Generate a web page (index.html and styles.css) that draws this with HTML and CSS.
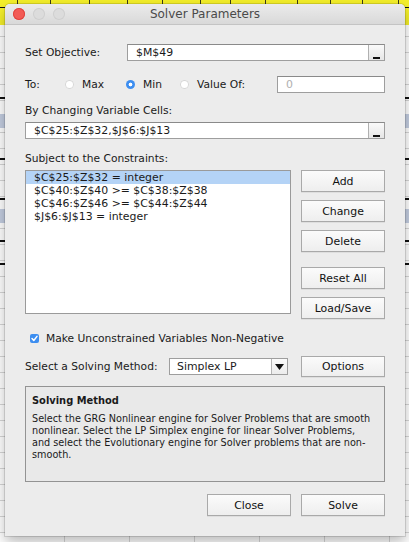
FILE: index.html
```html
<!DOCTYPE html>
<html>
<head>
<meta charset="utf-8">
<link rel="stylesheet" href="styles.css">
</head>
<body>
<div class="sheet">
  <div class="topcells"><span class="c1"></span><span class="c2"></span><span class="c3"></span><span class="c4"></span><span class="c5"></span><span class="c6"></span><span class="c7"></span><span class="c8"></span><span class="c9"></span><span class="c10"></span><span class="c11"></span><span class="c12"></span></div>
  <div class="mark m1"></div><div class="mark m2"></div><div class="mark m3"></div><div class="mark m4"></div>
  <div class="mark m5"></div><div class="mark m6"></div>
  <div class="cellsel s1"></div><div class="cellsel s2"></div>
</div>
<div class="window">
  <div class="titlebar">
    <div class="lights"><span class="light red"></span><span class="light"></span><span class="light"></span></div>
    <div class="title">Solver Parameters</div>
  </div>
  <div class="content">
    <div class="row r-obj">
      <div class="label w-obj">Set Objective:</div>
      <div class="field grow"><span class="ftext">$M$49</span><span class="refbtn"></span></div>
    </div>
    <div class="row r-to">
      <div class="label w-to">To:</div>
      <div class="radio-item r-max"><span class="radio"></span><span>Max</span></div>
      <div class="radio-item r-min"><span class="radio on"></span><span>Min</span></div>
      <div class="radio-item r-val"><span class="radio"></span><span>Value Of:</span></div>
      <div class="field valfield"><span class="ftext ph">0</span></div>
    </div>
    <div class="label l-cells">By Changing Variable Cells:</div>
    <div class="field f-cells"><span class="ftext">$C$25:$Z$32,$J$6:$J$13</span><span class="refbtn"></span></div>
    <div class="label l-cons">Subject to the Constraints:</div>
    <div class="cons">
      <div class="list">
        <div class="item sel">$C$25:$Z$32 = integer</div>
        <div class="item">$C$40:$Z$40 &gt;= $C$38:$Z$38</div>
        <div class="item">$C$46:$Z$46 &gt;= $C$44:$Z$44</div>
        <div class="item">$J$6:$J$13 = integer</div>
      </div>
      <div class="btncol">
        <div class="btn">Add</div>
        <div class="btn">Change</div>
        <div class="btn">Delete</div>
        <div class="btn b-reset">Reset All</div>
        <div class="btn">Load/Save</div>
      </div>
    </div>
    <div class="checkrow">
      <span class="check"><svg width="9" height="9" viewBox="0 0 9 9"><path d="M2 4.6 L3.8 6.5 L7 2.4" fill="none" stroke="#fff" stroke-width="1.5" stroke-linecap="round" stroke-linejoin="round"/></svg></span>
      <span>Make Unconstrained Variables Non-Negative</span>
    </div>
    <div class="row r-method">
      <div class="label w-method">Select a Solving Method:</div>
      <div class="select"><span class="stext">Simplex LP</span><span class="arrow"><svg width="9" height="6" viewBox="0 0 9 6"><path d="M0 0 H9 L4.5 6 Z" fill="#111"/></svg></span></div>
      <div class="btn b-options">Options</div>
    </div>
    <div class="desc">
      <div class="desc-title">Solving Method</div>
      <div class="desc-text">Select the GRG Nonlinear engine for Solver Problems that are smooth nonlinear. Select the LP Simplex engine for linear Solver Problems, and select the Evolutionary engine for Solver problems that are non-smooth.</div>
    </div>
    <div class="footer">
      <div class="btn">Close</div>
      <div class="btn">Solve</div>
    </div>
  </div>
</div>
</body>
</html>
```
FILE: styles.css
```css
html, body {
  margin: 0;
  padding: 0;
}
body {
  width: 409px;
  height: 542px;
  overflow: hidden;
  position: relative;
  font-family: "DejaVu Sans", sans-serif;
  color: #1a1a1a;
  background-color: #ffffff;
  background-image:
    repeating-linear-gradient(to bottom, transparent 0, transparent 15px, #d6d6d6 15px, #d6d6d6 16px),
    repeating-linear-gradient(to right, transparent 0, transparent 64px, #d6d6d6 64px, #d6d6d6 65px);
  background-size: 409px 542px, 409px 542px;
  background-repeat: no-repeat;
  background-position: 0 5px, 0 0;
}
.sheet {
  position: absolute;
  inset: 0;
}
.topcells {
  position: absolute;
  left: 0;
  top: 0;
  width: 409px;
  height: 25px;
  background: #f4ef2a;
  display: flex;
}
.topcells span {
  height: 25px;
  border-right: 1px solid #3a3a1a;
  box-sizing: border-box;
}
.c1 { width: 18px; }
.c2 { width: 33px; }
.c3 { width: 39px; }
.c4 { width: 38px; }
.c5 { width: 35px; }
.c6 { width: 38px; }
.c7 { width: 30px; }
.c8 { width: 35px; }
.c9 { width: 32px; }
.c10 { width: 33px; }
.c11 { width: 32px; }
.c12 { width: 36px; }
.mark {
  position: absolute;
  height: 2px;
  background: #111;
  width: 409px;
  left: 0;
}
.m1 { top: 7px; height: 1px; }
.m2 { top: 97px; }
.m3 { top: 158px; }
.m4 { top: 198px; }
.m5 { top: 240px; }
.m6 { top: 263px; }
.cellsel {
  position: absolute;
  height: 14px;
  width: 409px;
  left: 0;
  background: #c3cde0;
}
.s1 { top: 114px; }
.s2 { top: 209px; }

.window {
  position: relative;
  margin: 4px 0 0 5px;
  width: 400px;
  height: 532px;
  background: #ececec;
  border-radius: 5px 5px 0 0;
  box-shadow: 0 0 0 1px rgba(0,0,0,0.12), 0 6px 14px rgba(0,0,0,0.28);
  display: flex;
  flex-direction: column;
}
.titlebar {
  height: 21px;
  flex: none;
  background: linear-gradient(#ebebeb, #d9d9d9);
  border-bottom: 1px solid #c4c4c4;
  box-sizing: border-box;
  border-radius: 5px 5px 0 0;
  display: flex;
  align-items: center;
  position: relative;
}
.lights {
  display: flex;
  gap: 8px;
  padding-left: 8px;
}
.light {
  width: 12px;
  height: 12px;
  border-radius: 50%;
  background: #dcdcdc;
  box-shadow: inset 0 0 0 1px #cfcfcf;
}
.light.red {
  background: #f25b55;
  box-shadow: inset 0 0 0 1px #e0443e;
}
.title {
  position: absolute;
  left: 0;
  right: 0;
  text-align: center;
  font-size: 12px;
  color: #4a4a4a;
  line-height: 21px;
}
.content {
  padding: 19px 20px 20px 20px;
  display: flex;
  flex-direction: column;
  font-size: 10.7px;
}
.row {
  display: flex;
  align-items: center;
}
.label {
  font-size: 10.7px;
  line-height: 14px;
  white-space: nowrap;
}
.r-obj { height: 17px; }
.w-obj { width: 102px; }
.grow { flex: 1; }
.field {
  height: 17px;
  box-sizing: border-box;
  background: #fff;
  border: 1px solid #9e9e9e;
  border-top-color: #8a8a8a;
  display: flex;
  align-items: center;
  position: relative;
}
.ftext {
  padding-left: 8px;
  font-size: 10.9px;
  flex: 1;
  white-space: nowrap;
}
.ph { color: #b0b0b0; }
.refbtn {
  width: 16px;
  height: 15px;
  flex: none;
  box-sizing: border-box;
  border-left: 1px solid #b0b0b0;
  background: linear-gradient(#fafafa, #e6e6e6);
  position: relative;
}
.refbtn::after {
  content: "";
  position: absolute;
  left: 4px;
  bottom: 1px;
  width: 7px;
  height: 2px;
  background: #111;
}
.r-to { height: 17px; margin-top: 15px; }
.w-to { width: 40px; }
.radio-item {
  display: flex;
  align-items: center;
  gap: 8px;
  font-size: 10.7px;
}
.r-max { width: 61px; }
.r-min { width: 54px; }
.r-val { width: 97px; }
.radio {
  width: 9px;
  height: 9px;
  border-radius: 50%;
  background: #fff;
  box-shadow: inset 0 0 0 1px #d6d6d6;
  box-sizing: border-box;
}
.radio.on {
  background: radial-gradient(circle, #fff 0, #fff 1.6px, #3d8ef0 2.2px);
  box-shadow: none;
}
.valfield { flex: 1; }
.l-cells { margin-top: 11px; }
.f-cells { margin-top: 4px; }
.l-cons { margin-top: 13px; }
.cons {
  margin-top: 4px;
  height: 149px;
  display: flex;
  gap: 10px;
}
.list {
  width: 266px;
  height: 144px;
  box-sizing: border-box;
  background: #fff;
  border: 1px solid #9a9a9a;
}
.item {
  height: 13px;
  line-height: 13px;
  padding-left: 8px;
  font-size: 10.9px;
  white-space: nowrap;
}
.item.sel { background: #b4d3f6; }
.btncol {
  width: 84px;
  display: flex;
  flex-direction: column;
  gap: 8px;
}
.btn {
  height: 22px;
  box-sizing: border-box;
  border: 1px solid #a9a9a9;
  background: linear-gradient(#fbfbfb, #eeeeee);
  box-shadow: 0 1px 0 rgba(0,0,0,0.06);
  display: flex;
  align-items: center;
  justify-content: center;
  font-size: 10.9px;
  color: #111;
}
.b-reset { margin-top: 7px; }
.checkrow {
  margin-top: 12px;
  height: 14px;
  display: flex;
  align-items: center;
  gap: 7px;
  padding-left: 5px;
  font-size: 10.7px;
}
.check {
  width: 9px;
  height: 9px;
  border-radius: 2px;
  background: #3d8ef0;
  display: flex;
}
.r-method { margin-top: 11px; height: 21px; }
.w-method { width: 144px; }
.select {
  width: 119px;
  height: 17px;
  box-sizing: border-box;
  background: #fff;
  border: 1px solid #9e9e9e;
  display: flex;
  align-items: center;
}
.stext {
  flex: 1;
  padding-left: 7px;
  font-size: 10.9px;
}
.arrow {
  width: 15px;
  height: 15px;
  border-left: 1px solid #b5b5b5;
  background: linear-gradient(#fbfbfb, #ececec);
  display: flex;
  align-items: center;
  justify-content: center;
}
.b-options { width: 84px; margin-left: auto; height: 21px; }
.desc {
  margin-top: 9px;
  height: 96px;
  box-sizing: border-box;
  border: 1px solid #939393;
  background: #e9e9e9;
  padding: 7px 11px 0 6px;
}
.desc-title {
  font-weight: bold;
  font-size: 9.9px;
  line-height: 14px;
}
.desc-text {
  margin-top: 5px;
  font-size: 9.7px;
  line-height: 12px;
}
.footer {
  margin-top: 12px;
  display: flex;
  justify-content: flex-end;
  gap: 10px;
}
.footer .btn { width: 84px; }
```
